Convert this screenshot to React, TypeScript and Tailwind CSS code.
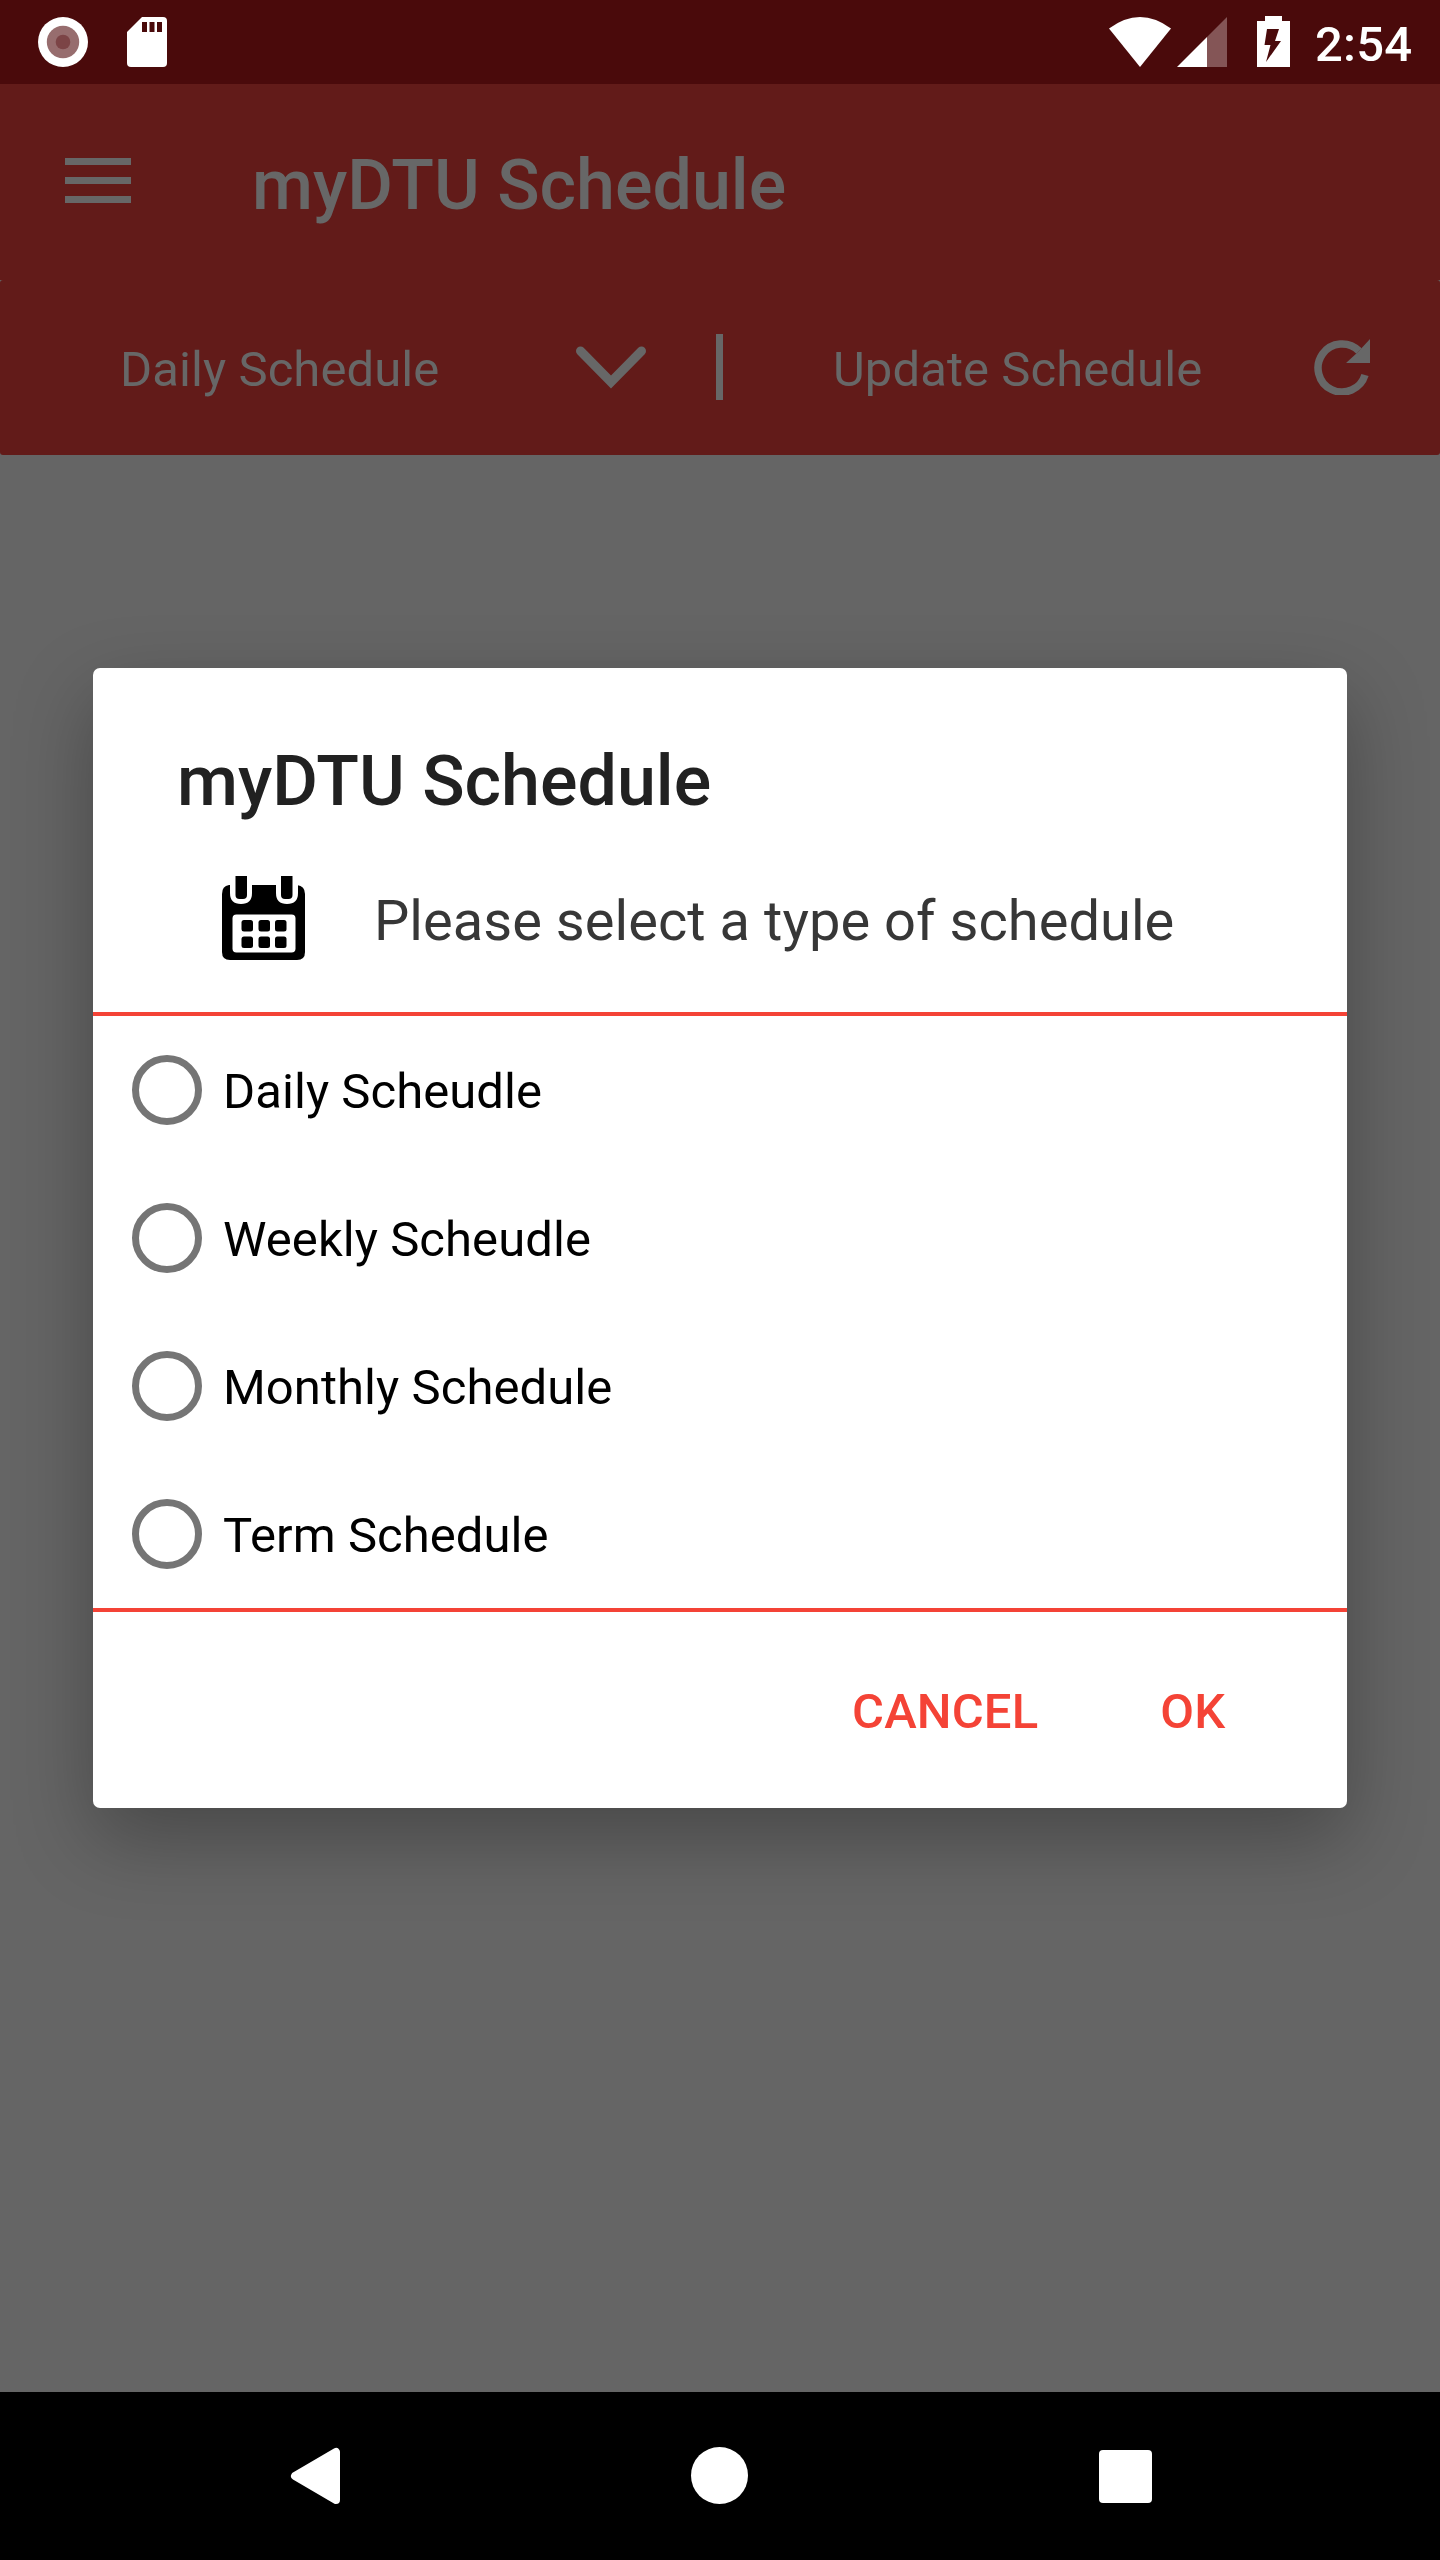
const OPTIONS = [
  "Daily Scheudle",
  "Weekly Scheudle",
  "Monthly Schedule",
  "Term Schedule",
];

const StatusBar = () => {
  return (
    <div className="flex h-[84px] bg-[#4a0a0b] text-white">
      <svg viewBox="0 0 180 84" className="h-[84px] w-[180px]" fill="#fff">
        <circle cx="63" cy="42" r="25" />
        <circle cx="63" cy="42" r="16.2" fill="#976d6e" />
        <circle cx="63" cy="42" r="7.3" fill="#7c4446" />
        <path d="M142 17h21a4 4 0 0 1 4 4v42a4 4 0 0 1-4 4h-32a4 4 0 0 1-4-4V32z" />
        <path d="M142 22h5v10h-5zM149.500 22h5v10h-5zM157 22h5v10h-5z" fill="#4a0a0b" />
      </svg>
      <svg viewBox="0 0 220 84" className="ml-auto h-[84px] w-[220px]" fill="#fff">
        <path d="M9 28.500Q40 5.500 71 28.500L40 67z" />
        <path d="M127 17v50h-20V37z" fill="#845556" />
        <path d="M107 37v30H77z" />
        <path
          fillRule="evenodd"
          d="M165 16h17v5h8v46h-33V21h8zM167 29l-2.500 16h6L166 62l15-21h-6l4-12z"
        />
      </svg>
      <span className="mt-[15px] w-[120px] text-[49px] leading-[60px] font-medium tracking-[0.2px] -indent-[5px]">
        2:54
      </span>
    </div>
  );
};

const Header = () => {
  return (
    <header className="h-[371px] text-[#676767]">
      <div className="flex h-[196px] items-center bg-[#621b19]">
        <div className="mb-[3px] ml-[65px] flex w-[66px] flex-col gap-[12px]">
          <span className="h-[7px] bg-[#676767]"></span>
          <span className="h-[7px] bg-[#676767]"></span>
          <span className="h-[7px] bg-[#676767]"></span>
        </div>
        <h1 className="ml-[121px] pt-[6px] text-[70px] leading-[82px] font-medium">
          myDTU Schedule
        </h1>
      </div>

      <div className="flex h-[175px] items-center rounded-[3px] bg-[#621b19] text-[49px] tracking-[0.08px]">
        <span className="w-[456px] pt-[4px] pl-[120px]">Daily Schedule</span>
        <svg viewBox="0 0 72 44" className="mb-[2px] ml-[119px] h-[44px] w-[72px]">
          <path
            d="M5.500 6L36 37 66.500 6"
            fill="none"
            stroke="#676767"
            strokeWidth="9"
            strokeLinecap="round"
          />
        </svg>
        <span className="mb-[1px] ml-[69px] h-[66px] w-[7px] bg-[#676767]"></span>
        <span className="ml-[110px] w-[481px] pt-[4px]">Update Schedule</span>
        <svg viewBox="0 0 56 56" className="mb-[2px] h-[56px] w-[56px]">
          <path
            d="M45 12A24 24 0 1 0 51 36"
            fill="none"
            stroke="#676767"
            strokeWidth="7.500"
          />
          <path d="M56 0v24H32L44 13z" fill="#676767" />
        </svg>
      </div>
    </header>
  );
};

const CalendarIcon = () => {
  return (
    <svg viewBox="0 0 84 84" className="h-[84px] w-[84px]">
      <path d="M8 9h68q8 1 8 9v58q0 8-8 8H9q-8 0-8-8V18q0-8 7-9z" />
      <path
        d="M9 0h22v17q0 11-11 11T9 17zM55 0h22v17q0 11-11 11T55 17z"
        fill="#fff"
      />
      <rect x="14.500" y="-5" width="11.500" height="28" rx="4" />
      <rect x="60" y="-5" width="11.500" height="28" rx="4" />
      <rect x="11.500" y="38.500" width="63" height="38" rx="4" fill="#fff" />
      <rect x="20.500" y="44" width="11.500" height="11.500" rx="2.500" />
      <rect x="37.500" y="44" width="11.500" height="11.500" rx="2.500" />
      <rect x="54" y="44" width="11.500" height="11.500" rx="2.500" />
      <rect x="20.500" y="60.500" width="11.500" height="11.500" rx="2.500" />
      <rect x="37.500" y="60.500" width="11.500" height="11.500" rx="2.500" />
      <rect x="54" y="60.500" width="11.500" height="11.500" rx="2.500" />
    </svg>
  );
};

const ScheduleDialog = () => {
  return (
    <div className="mx-auto h-[1140px] w-[1254px] rounded-[7px] bg-white shadow-[0_30px_80px_rgba(0,0,0,0.29)]">
      <div className="h-[344px] pt-[72px]">
        <h2 className="ml-[84px] text-[70px] leading-[82px] font-medium text-[#212121]">
          myDTU Schedule
        </h2>
        <div className="mt-[54px] ml-[128px] flex h-[84px] items-center">
          <CalendarIcon />
          <p className="ml-[69px] pt-[5px] text-[56px] leading-[66px] tracking-[0.04px] text-[#373737]">
            Please select a type of schedule
          </p>
        </div>
      </div>

      <div className="border-y-4 border-[#f44336]">
        {OPTIONS.map((option) => (
          <label key={option} className="flex h-[148px] items-center pl-[39px]">
            <span className="h-[70px] w-[70px] rounded-full border-[7px] border-[#757575]"></span>
            <span className="ml-[21px] pt-[4px] text-[49px] leading-[58px] tracking-[0.06px] text-black">
              {option}
            </span>
          </label>
        ))}
      </div>

      <div className="flex pt-[71px] text-[49px] leading-[58px] font-medium text-[#f44336]">
        <button className="ml-[759px] tracking-[0.15px]">CANCEL</button>
        <button className="ml-[122px] tracking-[0.15px]">OK</button>
      </div>
    </div>
  );
};

const NavBar = () => {
  return (
    <div className="flex h-[168px] items-center bg-black pl-[290px]">
      <svg viewBox="0 0 50 58" className="h-[58px] w-[50px]">
        <path
          d="M5 29L46 5V53z"
          fill="#fff"
          stroke="#fff"
          strokeWidth="8"
          strokeLinejoin="round"
        />
      </svg>
      <span className="mb-[2px] ml-[351px] h-[57px] w-[57px] rounded-full bg-white"></span>
      <span className="ml-[351px] h-[53px] w-[53px] rounded-[4px] bg-white"></span>
    </div>
  );
};

export default function App() {
  return (
    <div className="flex h-[2560px] w-[1440px] flex-col overflow-hidden bg-[#656565] font-['Roboto',sans-serif]">
      <StatusBar />
      <Header />
      <main className="flex-1 pt-[213px]">
        <ScheduleDialog />
      </main>
      <NavBar />
    </div>
  );
}
